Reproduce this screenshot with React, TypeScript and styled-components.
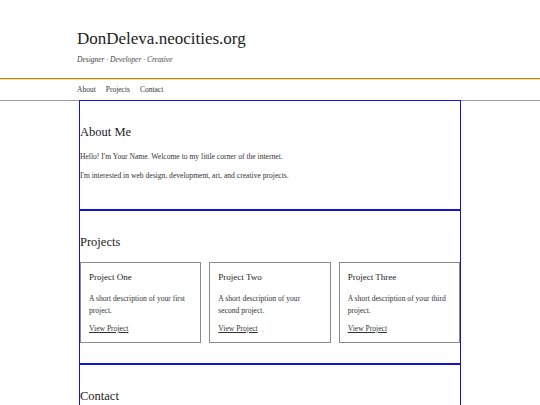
import React from "react";
import styled, { createGlobalStyle } from "styled-components";

const Global = createGlobalStyle`
  html, body { margin: 0; padding: 0; background: #fff; }
  body { font-family: "Liberation Serif", "Times New Roman", serif; color: #333; }
`;

const Header = styled.header`
  padding: 29px 0 13px;
  border-bottom: 1px solid #b8860b;
  box-shadow: 0 1px 0 #f0dfb0;
`;

const Inner = styled.div`
  width: 386px;
  margin: 0 auto;
`;

const Title = styled.h1`
  margin: 0;
  font-size: 17px;
  line-height: 20px;
  font-weight: normal;
  color: #222;
`;

const Tagline = styled.p`
  margin: 6px 0 0;
  font-size: 7.5px;
  line-height: 10px;
  font-style: italic;
  color: #444;
`;

const Nav = styled.nav`
  border-bottom: 1px solid #999;
`;

const NavList = styled.div`
  display: flex;
  gap: 10px;
  height: 21px;
  align-items: center;
`;

const NavLink = styled.a`
  font-size: 7.5px;
  line-height: 10px;
  color: #333;
  text-decoration: none;
`;

const Main = styled.main`
  width: 382px;
  margin: -1px auto 0;
`;

const Section = styled.section<{ $top?: number; $bottom?: number }>`
  border: 1px solid #1212d8;
  padding: ${(p) => p.$top ?? 23}px 0 ${(p) => p.$bottom ?? 28}px;
`;

const H2 = styled.h2<{ $gap?: number }>`
  margin: 0 0 ${(p) => p.$gap ?? 11}px;
  font-size: 12.5px;
  line-height: 16px;
  font-weight: normal;
  color: #222;
`;

const P = styled.p`
  margin: 0 0 8px;
  font-size: 7.6px;
  line-height: 11px;
  color: #333;
  &:last-child { margin-bottom: 0; }
`;

const Grid = styled.div`
  display: grid;
  grid-template-columns: repeat(3, 1fr);
  gap: 8px;
`;

const Card = styled.div`
  border: 1px solid #8a8a8a;
  padding: 8px 8px 7px;
`;

const CardTitle = styled.h3`
  margin: 0 0 10px;
  font-size: 9px;
  line-height: 12px;
  font-weight: normal;
  color: #222;
`;

const CardText = styled.p`
  margin: 0 0 7px;
  font-size: 7.6px;
  line-height: 11.5px;
  color: #333;
`;

const CardLink = styled.a`
  display: block;
  font-size: 7.6px;
  line-height: 12px;
  color: #333;
  text-decoration: underline;
`;

const projects = [
  { t: "Project One", d: "A short description of your first project." },
  { t: "Project Two", d: "A short description of your second project." },
  { t: "Project Three", d: "A short description of your third project." },
];

export default function App() {
  return (
    <>
      <Global />
      <Header>
        <Inner>
          <Title>DonDeleva.neocities.org</Title>
          <Tagline>Designer · Developer · Creative</Tagline>
        </Inner>
      </Header>
      <Nav>
        <Inner>
          <NavList>
            <NavLink href="#about">About</NavLink>
            <NavLink href="#projects">Projects</NavLink>
            <NavLink href="#contact">Contact</NavLink>
          </NavList>
        </Inner>
      </Nav>
      <Main>
        <Section id="about">
          <H2>About Me</H2>
          <P>Hello! I'm Your Name. Welcome to my little corner of the internet.</P>
          <P>I'm interested in web design, development, art, and creative projects.</P>
        </Section>
        <Section id="projects" $bottom={20}>
          <H2 $gap={12}>Projects</H2>
          <Grid>
            {projects.map((p) => (
              <Card key={p.t}>
                <CardTitle>{p.t}</CardTitle>
                <CardText>{p.d}</CardText>
                <CardLink href="#">View Project</CardLink>
              </Card>
            ))}
          </Grid>
        </Section>
        <Section id="contact" $top={23}>
          <H2>Contact</H2>
        </Section>
      </Main>
    </>
  );
}
